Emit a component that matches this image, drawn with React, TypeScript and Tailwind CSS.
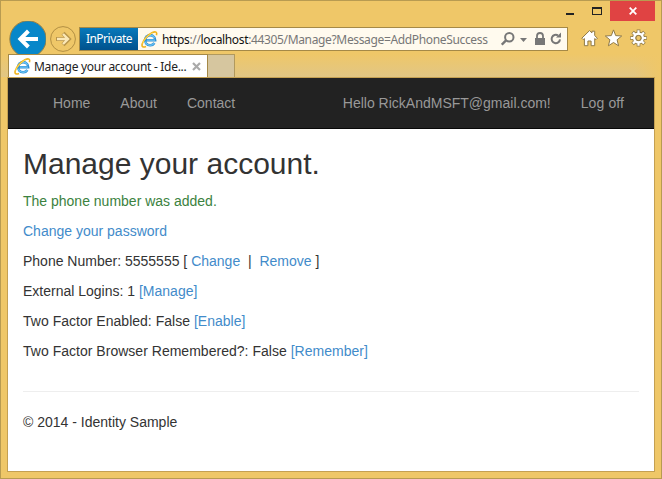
import type { ReactNode } from "react";

function IeLogo() {
  return (
    <svg width="17" height="17" viewBox="0 0 17 17" className="block shrink-0" fill="none">
      <path d="M13.4 12A5.1 5.1 0 1 1 14.2 9.2H5.4" stroke="#2e8fd4" strokeWidth="2.5" />
      <path d="M13.3 12A5.1 5.1 0 0 1 4.2 10.6M4 8A5.1 5.1 0 0 1 13.6 7.2M14 9.2H6" stroke="#6cc4f3" strokeWidth="1.3" />
      <path d="M5 15.4C2.3 16.6 .4 16.1 1.2 12.9C2.2 9 6.9 3.6 11.4 1.5C14.6 .1 16.4 1 15.4 4.2" stroke="#f0b41c" strokeWidth="1.6" />
      <path d="M1.7 12.5C3 8.5 7.4 3.9 11.5 1.9" stroke="#ffdc58" strokeWidth="1" />
    </svg>
  );
}

function WindowControls() {
  return (
    <div className="flex h-[20px] justify-end pr-[6px]">
      <svg width="44" height="20" viewBox="0 0 44 20" className="block">
        <path d="M0 12h8v2H0z" fill="#222" />
        <path d="M26 6h10v8H26zM27 8v5h8V8z" fill="#222" fillRule="evenodd" />
      </svg>
      <div className="flex h-[20px] w-[45px] items-center justify-center bg-[#e04343]">
        <svg width="8" height="8" viewBox="0 0 8 8" className="mr-[-1px] mb-[1px]">
          <path d="M.7.7l6.6 6.6M7.3.7L.7 7.3" stroke="#fff" strokeWidth="1.8" />
        </svg>
      </div>
    </div>
  );
}

function AddressBar() {
  return (
    <div className="flex h-[24px] w-[489px] shrink-0 items-center border border-[#a58947] bg-[#fffaee] font-['Noto_Sans',sans-serif] text-[12px]">
      <div className="flex h-full w-[58px] shrink-0 items-center justify-center bg-linear-to-b from-[#0879bb] to-[#00528d] text-white">
        <span className="tracking-[-0.5px]">InPrivate</span>
      </div>
      <div className="ml-[3px]"><IeLogo /></div>
      <span className="mt-[2px] ml-[4px] w-[339px] whitespace-nowrap tracking-[-0.35px] text-[#777]">
        <span className="text-[#111]">https</span>://<span className="text-[#111]">localhost</span>:44305/Manage?Message=AddPhoneSuccess
      </span>
      <svg width="64" height="18" viewBox="0 0 64 18" className="block shrink-0" fill="none">
        <circle cx="8.3" cy="7.2" r="4.2" stroke="#777" strokeWidth="2" />
        <path d="M5.3 10.2L.8 14.7" stroke="#777" strokeWidth="2.4" />
        <path d="M19 8h7l-3.5 4z" fill="#777" />
        <path d="M34 8h10v7H34z" fill="#777" />
        <path d="M36 8V6a3 3 0 0 1 6 0v2" stroke="#777" strokeWidth="1.8" />
        <path d="M57 5.4A4.2 4.2 0 1 0 59 9.4" stroke="#777" strokeWidth="2" />
        <path d="M55 7.6h5V2.6z" fill="#777" />
      </svg>
    </div>
  );
}

const gearTeeth = "M57.5 1.6v16.8M49.1 10h16.8M51.6 4.1l11.8 11.8M63.4 4.1L51.6 15.9";

function Toolbar() {
  return (
    <div className="flex h-[33px] items-start overflow-hidden pl-[7px]">
      <svg width="38" height="38" viewBox="0 0 38 38" className="mt-[-2px] block shrink-0" fill="none">
        <circle cx="20" cy="20" r="18.2" fill="#0787c9" stroke="#9c8243" />
        <path d="M30 20H13M20.4 12L12.4 20l8 8" stroke="#fff" strokeWidth="4" />
      </svg>
      <svg width="28" height="28" viewBox="0 0 28 28" className="ml-[4px] mt-[4px] block shrink-0" fill="none">
        <circle cx="13" cy="14" r="12.4" stroke="#b28f43" />
        <path d="M6 14H18M13 8.3l5.7 5.7-5.7 5.7" stroke="#b8954a" strokeWidth="4.2" />
        <path d="M7 14h10.5M13 9l5 5-5 5" stroke="#fbe8b7" strokeWidth="2.4" />
      </svg>
      <div className="mt-[6px] ml-[1px]"><AddressBar /></div>
      <svg width="68" height="20" viewBox="0 0 68 20" className="mt-[7px] ml-[13px] block shrink-0" fill="#fff" stroke="#8f7a48" strokeWidth="1">
        <path d="M.8 10.2L8.5 2.6l2.4 2.3V3.2h2.8v4.4l2.7 2.6-1.4 1.4-1.3-1.1v7.2h-3.6V13H6.9v4.7H3.4v-7.2l-1.2 1.1z" />
        <path d="M32.5 1.9l2.2 5.7 6 .4-4.6 3.8 1.5 6-5.1-3.3-5.1 3.3 1.5-6L24.3 8l6-.4z" />
        <g fill="none">
          <path d={gearTeeth} stroke="#8f7a48" strokeWidth="3.6" />
          <circle cx="57.5" cy="10" r="4.4" stroke="#8f7a48" strokeWidth="4" />
          <path d="M57.5 2.2v3M57.5 14.8v3M49.7 10h3M62.3 10h3M52 4.5l2.4 2.4M60.6 13.1l2.4 2.4M63 4.5l-2.4 2.4M54.4 13.1L52 15.5" stroke="#fff" strokeWidth="2.2" />
          <circle cx="57.5" cy="10" r="4.3" stroke="#fff" strokeWidth="2.4" />
        </g>
        <circle cx="57.5" cy="10" r="2.6" fill="#efc768" />
      </svg>
    </div>
  );
}

function Tabs() {
  return (
    <div className="flex h-[23px] bg-linear-to-b from-[#efc768] to-[#e1c684] pl-[7px] font-['Noto_Sans',sans-serif] text-[12px] text-[#222]">
      <div className="flex w-[200px] shrink-0 items-center border-x border-t border-[#a58947] bg-white pl-[5px]">
        <IeLogo />
        <span className="mt-[1px] ml-[3px] w-[158px] whitespace-nowrap tracking-[-0.29px]">Manage your account - Ide...</span>
        <svg width="9" height="9" viewBox="0 0 9 9" className="block shrink-0">
          <path d="M1 1l7 7M8 1L1 8" stroke="#aaa" strokeWidth="2.2" />
        </svg>
      </div>
      <div className="w-[27px] border-t border-r border-[#b1995d] bg-[#d6c69f]" />
      <div className="ml-auto w-[27px] bg-linear-to-r from-transparent to-[#efc768]" />
    </div>
  );
}

function Link({ children }: { children: ReactNode }) {
  return <a className="text-[#428bca]">{children}</a>;
}

export default function App() {
  return (
    <div className="flex h-[479px] w-[662px] flex-col overflow-hidden border border-[#b89b51] bg-[#efc768]">
      <WindowControls />
      <Toolbar />
      <Tabs />
      <div className="mx-[6px] mb-[6px] flex min-h-0 flex-1 flex-col border border-[#c4a052] bg-white font-['Liberation_Sans',Arial,sans-serif] text-[14px] leading-[20px] text-[#333]">
        <nav className="flex h-[51px] shrink-0 border-b border-[#080808] bg-[#222] pt-[15px] pl-[45px] text-[#999]">
          <a>Home</a>
          <a className="ml-[30px]">About</a>
          <a className="ml-[30px]">Contact</a>
          <a className="ml-auto">Hello RickAndMSFT@gmail.com!</a>
          <a className="mr-[30px] ml-[30px] tracking-[0.1px]">Log off</a>
        </nav>
        <main className="px-[15px] pt-[18px]">
          <h2 className="mb-[11px] text-[30px] leading-[33px]">Manage your account.</h2>
          <p className="mb-[10px] text-[#3b8240]">The phone number was added.</p>
          <p className="mb-[10px]"><Link>Change your password</Link></p>
          <p className="mb-[10px]">Phone Number: 5555555 [ <Link>Change</Link> &nbsp;|&nbsp; <Link>Remove</Link> ]</p>
          <p className="mb-[10px]">External Logins: 1 <Link>[Manage]</Link></p>
          <p className="mb-[10px] tracking-[0.02px]">Two Factor Enabled: False <Link>[Enable]</Link></p>
          <p className="tracking-[0.02px]">Two Factor Browser Remembered?: False <Link>[Remember]</Link></p>
          <hr className="my-[20px] mt-[30px] border-[#eee]" />
          <footer>© 2014 - Identity Sample</footer>
        </main>
      </div>
    </div>
  );
}
